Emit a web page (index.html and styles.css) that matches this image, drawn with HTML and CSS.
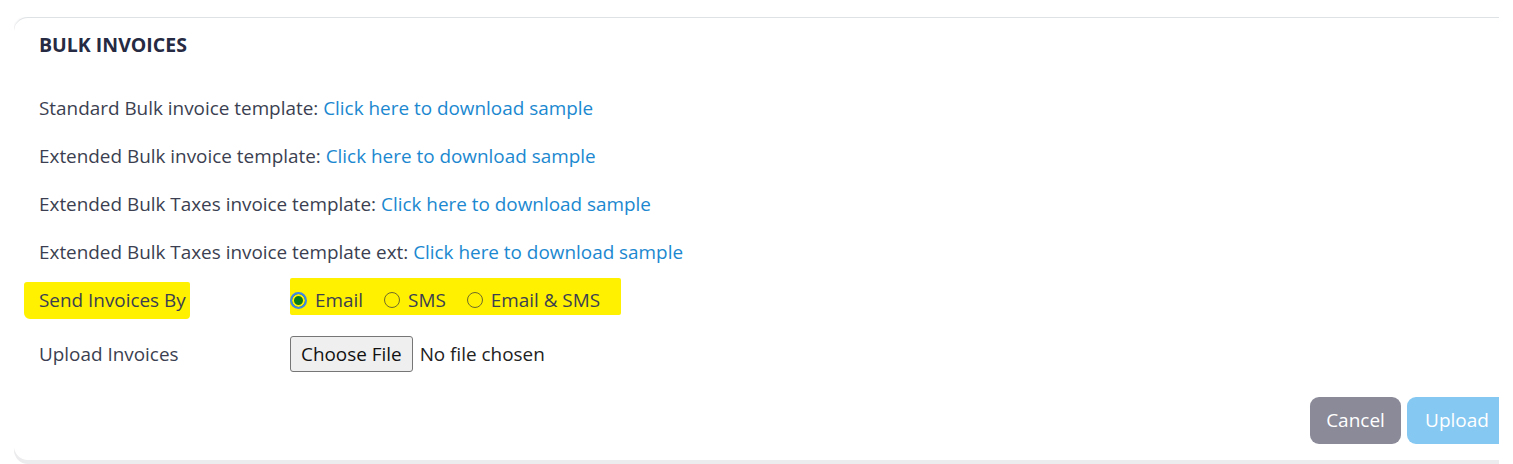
FILE: index.html
```html
<!DOCTYPE html>
<html>
<head>
<meta charset="utf-8">
<link rel="stylesheet" href="styles.css">
</head>
<body>
<div class="frame">
  <div class="card">
    <h2 class="title">BULK INVOICES</h2>
    <div class="rows">
      <div class="row">Standard Bulk invoice template: <a class="link" href="#">Click here to download sample</a></div>
      <div class="row">Extended Bulk invoice template: <a class="link" href="#">Click here to download sample</a></div>
      <div class="row">Extended Bulk Taxes invoice template: <a class="link" href="#">Click here to download sample</a></div>
      <div class="row">Extended Bulk Taxes invoice template ext: <a class="link" href="#">Click here to download sample</a></div>
      <div class="row field">
        <div class="label"><span class="hl hl-label">Send Invoices By</span></div>
        <div class="options hl hl-opts">
          <span class="opt"><span class="radio checked"></span>Email</span>
          <span class="opt"><span class="radio"></span>SMS</span>
          <span class="opt"><span class="radio"></span>Email &amp; SMS</span>
        </div>
      </div>
      <div class="row field">
        <div class="label">Upload Invoices</div>
        <div class="file">
          <span class="choose">Choose File</span>
          <span class="nofile">No file chosen</span>
        </div>
      </div>
    </div>
    <div class="actions">
      <span class="btn cancel">Cancel</span>
      <span class="btn upload">Upload</span>
    </div>
  </div>
</div>
</body>
</html>
```

FILE: styles.css
```css
html, body {
  margin: 0;
  padding: 0;
  background: #ffffff;
}
body {
  font-family: "Open Sans", "Noto Sans", sans-serif;
  color: #3b3f51;
  font-size: 18.9px;
}
.frame {
  margin-left: 14px;
  margin-top: 17px;
  width: 1485px;
  overflow: hidden;
  padding-bottom: 6px;
}
.card {
  width: 1540px;
  background: #fff;
  border-top: 1px solid #dfe2e5;
  border-radius: 14px;
  box-shadow: 0 4px 0 #ececee, -1px 0 2px rgba(0,0,0,0.06);
  padding: 15px 0 16px 25px;
  box-sizing: border-box;
  height: 443px;
}
.title {
  margin: 0;
  font-size: 19.5px;
  font-weight: 700;
  line-height: 24px;
  color: #262a42;
}
.rows {
  margin-top: 39px;
  display: flex;
  flex-direction: column;
  gap: 24px;
}
.row {
  line-height: 24px;
  height: 24px;
  white-space: nowrap;
}
.link {
  color: #1b88d0;
  text-decoration: none;
}
.field {
  display: flex;
  align-items: center;
}
.row.field:last-child {
  height: 36px;
}
.label {
  width: 251px;
  flex: none;
}
.hl {
  position: relative;
  z-index: 0;
}
.hl::before {
  content: "";
  position: absolute;
  z-index: -1;
  background: #fff100;
}
.hl-label::before {
  left: -15px;
  right: -4px;
  top: -5px;
  bottom: -6px;
  border-radius: 3px 2px 4px 6px;
}
.hl-opts::before {
  left: 0;
  right: -21px;
  top: -10px;
  bottom: -3px;
  border-radius: 2px;
}
.options {
  display: flex;
  align-items: center;
  gap: 21px;
}
.opt {
  display: flex;
  align-items: center;
  gap: 8px;
}
.radio {
  width: 16px;
  height: 16px;
  border: 1.3px solid #6f6b2a;
  border-radius: 50%;
  box-sizing: border-box;
  display: inline-block;
}
.radio.checked {
  width: 17px;
  height: 17px;
  border: 2px solid #3f86e8;
  background: #0b7d18;
  box-shadow: inset 0 0 0 2px #fff100;
}
.file {
  display: flex;
  align-items: center;
  gap: 7px;
}
.choose {
  display: inline-block;
  height: 36px;
  line-height: 34px;
  box-sizing: border-box;
  padding: 0 10px;
  border: 1px solid #767676;
  border-radius: 3px;
  background: #efefef;
  color: #111;
}
.nofile {
  color: #222;
}
.actions {
  margin-top: 25px;
  display: flex;
  gap: 6px;
  margin-left: 1271px;
}
.btn {
  display: inline-block;
  height: 47px;
  line-height: 47px;
  border-radius: 9px;
  color: #fff;
  text-align: center;
  font-size: 19px;
}
.cancel {
  width: 91px;
  background: #8a8a99;
}
.upload {
  width: 100px;
  background: #85c8f2;
}
```
